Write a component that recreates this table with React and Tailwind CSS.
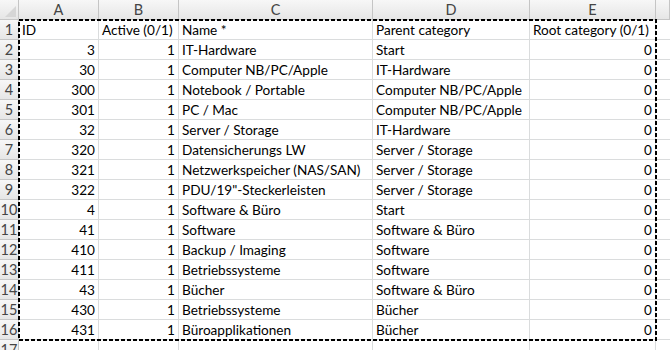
import React from 'react'

const COLS = [
  { key: 'A', w: 'w-[80px]' },
  { key: 'B', w: 'w-[80px]' },
  { key: 'C', w: 'w-[194px]' },
  { key: 'D', w: 'w-[157px]' },
  { key: 'E', w: 'w-[126px]' },
]

const rows = [
  ['ID', 'Active (0/1)', 'Name *', 'Parent category', 'Root category (0/1)'],
  [3, 1, 'IT-Hardware', 'Start', 0],
  [30, 1, 'Computer NB/PC/Apple', 'IT-Hardware', 0],
  [300, 1, 'Notebook / Portable', 'Computer NB/PC/Apple', 0],
  [301, 1, 'PC / Mac', 'Computer NB/PC/Apple', 0],
  [32, 1, 'Server / Storage', 'IT-Hardware', 0],
  [320, 1, 'Datensicherungs LW', 'Server / Storage', 0],
  [321, 1, 'Netzwerkspeicher (NAS/SAN)', 'Server / Storage', 0],
  [322, 1, 'PDU/19"-Steckerleisten', 'Server / Storage', 0],
  [4, 1, 'Software & Büro', 'Start', 0],
  [41, 1, 'Software', 'Software & Büro', 0],
  [410, 1, 'Backup / Imaging', 'Software', 0],
  [411, 1, 'Betriebssysteme', 'Software', 0],
  [43, 1, 'Bücher', 'Software & Büro', 0],
  [430, 1, 'Betriebssysteme', 'Bücher', 0],
  [431, 1, 'Büroapplikationen', 'Bücher', 0],
  ['', '', '', '', ''],
]

const headCell =
  'h-[20px] shrink-0 border-r border-b border-[#c5c5c5] bg-gradient-to-b from-[#f7f7f7] to-[#e6e6e6] text-[#444] flex items-center justify-center pt-[1px]'

export default function App() {
  return (
    <div className="relative w-[670px] h-[350px] overflow-hidden bg-white font-['Lato',sans-serif] text-[13.6px] leading-none">
      {/* column headers */}
      <div className="flex">
        <div className={`${headCell} w-[19px] relative`}>
          <div className="absolute right-[2px] bottom-[2px] w-0 h-0 border-l-[11px] border-l-transparent border-b-[11px] border-b-[#d6d6d6]" />
        </div>
        {COLS.map((c) => (
          <div key={c.key} className={`${headCell} ${c.w} text-[14.5px]`}>
            {c.key}
          </div>
        ))}
        <div className={`${headCell} flex-1`} />
      </div>

      {/* rows */}
      {rows.map((r, i) => (
        <div key={i} className="flex">
          <div className={`${headCell} w-[19px] text-[14.5px]`}>{i + 1}</div>
          {r.map((v, j) => (
            <div
              key={j}
              className={`h-[20px] shrink-0 border-r border-b border-[#dadcdd] px-[3px] pt-[3px] flex items-center whitespace-nowrap overflow-visible text-black ${COLS[j].w} ${
                typeof v === 'number' ? 'justify-end' : 'justify-start'
              }`}
            >
              {v}
            </div>
          ))}
          <div className="h-[20px] flex-1 border-b border-[#dadcdd]" />
        </div>
      ))}

      {/* copy marquee */}
      <svg className="absolute left-[18px] top-[19px]" width="639" height="322">
        <rect x="1" y="1" width="637" height="320" fill="none" stroke="#000" strokeWidth="2" strokeDasharray="4 2" />
      </svg>
    </div>
  )
}
